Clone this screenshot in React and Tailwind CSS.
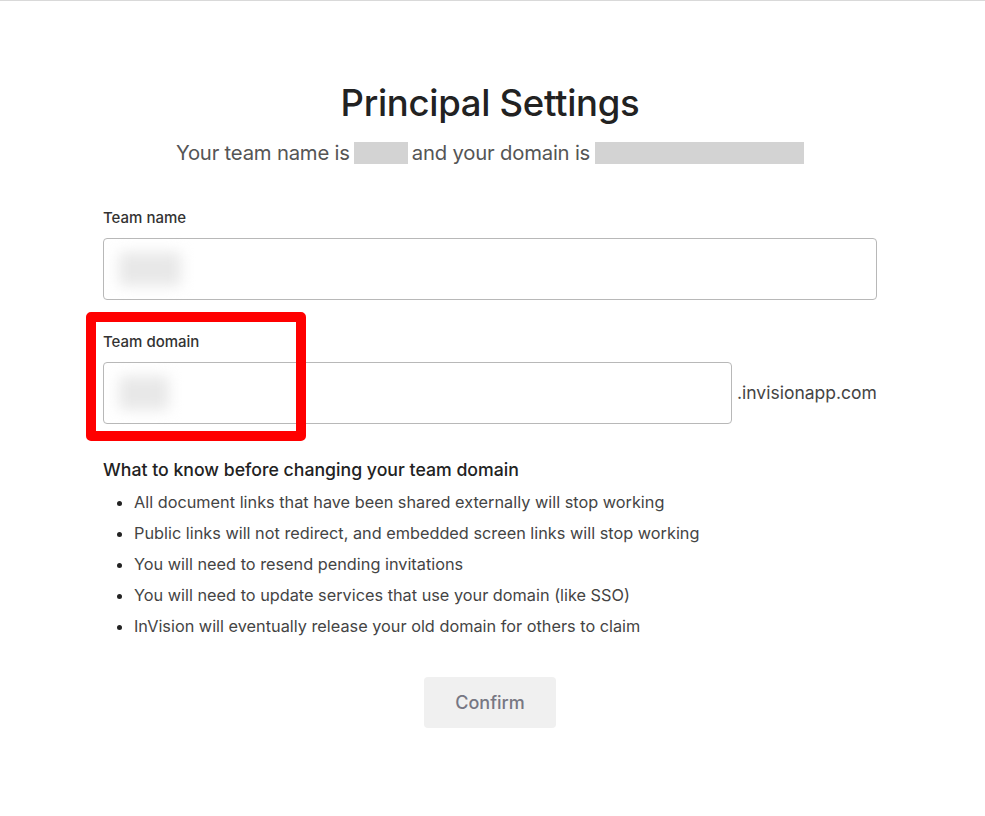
import React from "react";

const notes = [
  "All document links that have been shared externally will stop working",
  "Public links will not redirect, and embedded screen links will stop working",
  "You will need to resend pending invitations",
  "You will need to update services that use your domain (like SSO)",
  "InVision will eventually release your old domain for others to claim",
];

function Blur({ w }) {
  return (
    <div className={`h-[34px] ${w} rounded bg-[#e8e8e8] blur-[7px]`} />
  );
}

export default function App() {
  return (
    <div className="min-h-[816px] bg-white border-t border-[#d9d9d9] font-['Inter',sans-serif] text-[#333]">
      <div className="ml-[103px] w-[774px] pt-[80px]">
        <h1 className="text-center text-[36.5px] leading-[44px] font-medium tracking-[-0.3px] text-[#222]">
          Principal Settings
        </h1>
        <p className="mt-[16px] flex items-center justify-center text-[20.3px] leading-[24px] text-[#555] tracking-[-0.2px]">
          Your team name is
          <span className="mx-[4px] inline-block h-[22px] w-[54px] bg-[#d3d3d3]" />
          and your domain is
          <span className="ml-[5px] inline-block h-[22px] w-[209px] bg-[#d3d3d3]" />
        </p>

        <div className="mt-[43px]">
          <label className="block text-[15px] leading-[20px] font-medium text-[#333]">Team name</label>
          <div className="mt-[10px] flex h-[62px] items-center rounded-[4px] border border-[#b8b8b8] px-[15px]">
            <Blur w="w-[62px]" />
          </div>
        </div>

        <div className="relative mt-[32px]">
          <div className="absolute left-[-17px] top-[-20px] h-[129px] w-[220px] rounded-[5px] border-[10px] border-[#ff0000] pointer-events-none" />
          <label className="block text-[15px] leading-[20px] font-medium text-[#333]">Team domain</label>
          <div className="mt-[10px] flex items-center">
            <div className="flex h-[62px] w-[629px] items-center rounded-[4px] border border-[#b8b8b8] px-[15px]">
              <Blur w="w-[50px]" />
            </div>
            <span className="ml-[5px] text-[17.5px] text-[#444]">.invisionapp.com</span>
          </div>
        </div>

        <h2 className="mt-[34px] text-[17.7px] leading-[24px] font-medium text-[#222]">
          What to know before changing your team domain
        </h2>
        <ul className="mt-[5px] pl-[31px] list-disc text-[16.3px] leading-[31px] text-[#444] marker:text-[#222]">
          {notes.map((n, i) => (
            <li key={i}>{n}</li>
          ))}
        </ul>

        <div className="mt-[35px] flex justify-center">
          <button className="h-[51px] w-[132px] rounded-[4px] bg-[#f0f0f0] text-[18px] font-medium text-[#777783]">
            Confirm
          </button>
        </div>
      </div>
    </div>
  );
}
